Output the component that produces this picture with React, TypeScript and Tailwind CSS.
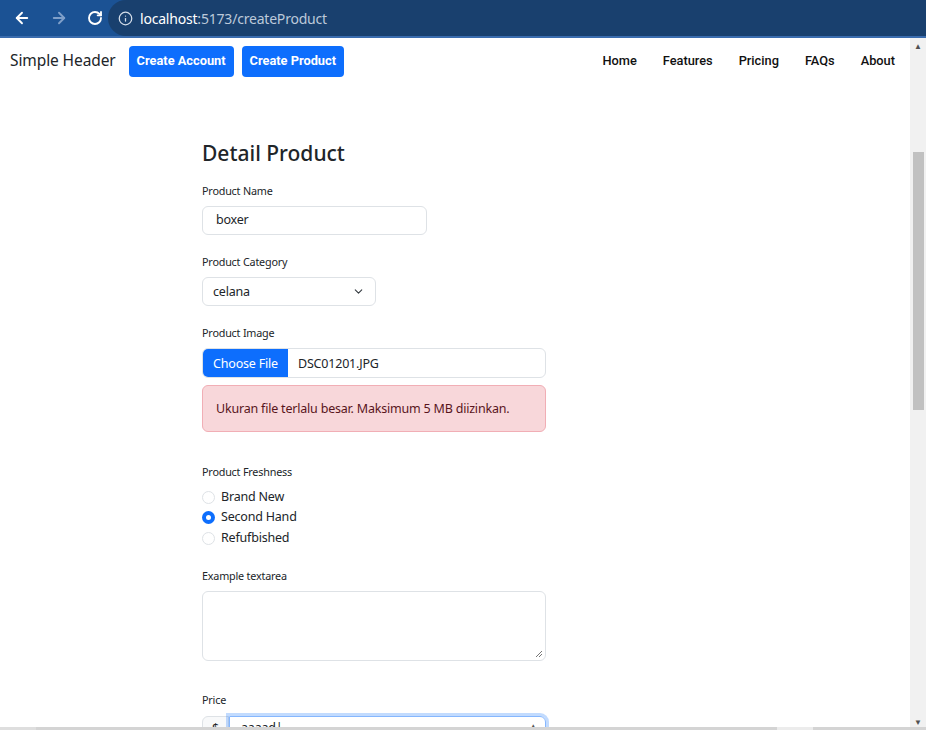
import React from 'react';
import { ArrowLeft, ArrowRight, RotateCw, Info, ChevronDown } from 'lucide-react';

const sans = "font-['Noto_Sans','Open_Sans',sans-serif]";
const navFont = "font-['Roboto','Liberation_Sans',sans-serif]";

const Label: React.FC<{ children: React.ReactNode }> = ({ children }) => (
  <div className="text-[10.8px] leading-[16px] text-[#212529]">{children}</div>
);

const Radio: React.FC<{ label: string; checked?: boolean }> = ({ label, checked }) => (
  <div className="flex items-center h-[20.5px] gap-[6px]">
    {checked ? (
      <span className="w-[13px] h-[13px] rounded-full bg-[#0d6efd] flex items-center justify-center">
        <span className="w-[5px] h-[5px] rounded-full bg-white" />
      </span>
    ) : (
      <span className="w-[13px] h-[13px] rounded-full border border-[#dee2e6] bg-white" />
    )}
    <span className="text-[12.5px] tracking-[-0.2px] text-[#212529]">{label}</span>
  </div>
);

const App: React.FC = () => {
  return (
    <div className={`w-[926px] h-[730px] overflow-hidden flex flex-col bg-white relative ${sans}`}>
      {/* browser bar */}
      <div className="h-[38px] flex-shrink-0 bg-[#1b5294] border-b-2 border-[#3a6cae] flex items-center">
        <div className="flex items-center gap-[19px] pl-[13px] w-[108px] text-white">
          <ArrowLeft className="w-[18px] h-[18px]" strokeWidth={2.5} />
          <ArrowRight className="w-[18px] h-[18px] text-[#7f9fc9]" strokeWidth={2.5} />
          <RotateCw className="w-[16px] h-[16px]" strokeWidth={2.8} />
        </div>
        <div className="flex-1 h-[36px] bg-[#19406e] rounded-l-full flex items-center pl-[10px] gap-[7px]">
          <Info className="w-[15px] h-[15px] text-[#d6dfea]" strokeWidth={2} />
          <span className="text-[14px] tracking-[-0.2px] text-white">
            localhost<span className="text-[#bcc9da]">:5173/createProduct</span>
          </span>
        </div>
      </div>

      <div className="flex flex-1 min-h-0">
        <div className="flex-1 min-w-0 overflow-hidden">
          {/* header */}
          <div className="h-[46px] flex items-center pl-[10px] pr-[15px]">
            <span className="text-[15.5px] tracking-[-0.1px] text-[#212529] mr-[13px]">Simple Header</span>
            <button className={`h-[31px] px-[8px] rounded-[4px] bg-[#0d6efd] text-white text-[12.8px] font-bold mr-[8px] ${navFont}`}>
              Create Account
            </button>
            <button className={`h-[31px] px-[8px] rounded-[4px] bg-[#0d6efd] text-white text-[12.8px] font-bold ${navFont}`}>
              Create Product
            </button>
            <nav className={`ml-auto flex items-center gap-[26px] text-[12.8px] font-medium text-[#111] ${navFont}`}>
              <span>Home</span>
              <span>Features</span>
              <span>Pricing</span>
              <span>FAQs</span>
              <span>About</span>
            </nav>
          </div>

          {/* form */}
          <div className="pl-[202px] pt-[56px] w-[546px] box-content text-[12.5px] tracking-[-0.2px]">
            <h2 className="text-[21px] leading-[26px] font-medium tracking-normal text-[#212529] mb-[17px]">Detail Product</h2>

            <Label>Product Name</Label>
            <div className="mt-[7px] w-[225px] h-[29px] border border-[#dee2e6] rounded-[6px] flex items-center pl-[13px] text-[#212529]">
              boxer
            </div>

            <div className="mt-[19px]"><Label>Product Category</Label></div>
            <div className="mt-[7px] w-[174px] h-[29px] border border-[#dee2e6] rounded-[6px] flex items-center pl-[10px] pr-[10px] text-[#212529]">
              <span className="flex-1 pt-[2px]">celana</span>
              <ChevronDown className="w-[13px] h-[13px] text-[#343a40]" strokeWidth={2} />
            </div>

            <div className="mt-[19px]"><Label>Product Image</Label></div>
            <div className="mt-[7px] w-[344px] h-[30px] border border-[#dee2e6] rounded-[6px] flex overflow-hidden">
              <div className="w-[85px] bg-[#0d6efd] text-white flex items-center justify-center pt-[2px]">Choose File</div>
              <div className="flex items-center pl-[10px] pt-[2px] text-[#212529]">DSC01201.JPG</div>
            </div>
            <div className="mt-[7px] w-[344px] h-[47px] bg-[#f8d7da] border border-[#f1aeb5] rounded-[6px] flex items-center pl-[13px] pt-[2px] text-[#58151c]">
              Ukuran file terlalu besar. Maksimum 5 MB diizinkan.
            </div>

            <div className="mt-[32px]"><Label>Product Freshness</Label></div>
            <div className="mt-[7px] flex flex-col">
              <Radio label="Brand New" />
              <Radio label="Second Hand" checked />
              <Radio label="Refufbished" />
            </div>

            <div className="mt-[19px]"><Label>Example textarea</Label></div>
            <div className="mt-[7px] relative w-[344px] h-[70px] border border-[#dee2e6] rounded-[6px]">
              <svg className="absolute right-[2px] bottom-[2px]" width="8" height="8" viewBox="0 0 8 8">
                <path d="M7 1L1 7M7 4L4 7" stroke="#777" strokeWidth="1" />
              </svg>
            </div>

            <div className="mt-[31px]"><Label>Price</Label></div>
            <div className="mt-[8px] w-[344px] h-[31px] flex">
              <div className="w-[27px] border border-[#dee2e6] rounded-l-[6px] bg-[#f8f9fa] flex justify-center pt-[4px] leading-[16px] text-[#212529]">$</div>
              <div className="flex-1 relative border border-[#86b7fe] rounded-r-[6px] shadow-[0_0_0_3px_rgba(13,110,253,0.25)] pl-[11px] pt-[3px] leading-[16px] text-[#212529]">
                aaaad|
                <span className="absolute right-[8px] top-[4px] text-[8px] leading-[10px] text-[#555]">▲</span>
              </div>
            </div>
          </div>
        </div>

        {/* scrollbar */}
        <div className="w-[16px] flex-shrink-0 bg-[#f1f1f1] flex flex-col items-center">
          <span className="text-[8px] leading-[10px] text-[#505050] mt-[3px]">▲</span>
          <div className="mt-[101px] w-[11px] h-[258px] bg-[#c1c1c1]" />
          <span className="mt-auto mb-[3px] text-[8px] leading-[10px] text-[#505050]">▼</span>
        </div>
      </div>

      {/* bottom strip */}
      <div className="absolute left-0 right-0 bottom-0 h-[3px] bg-[#d4d4d4] flex">
        <div className="w-[36px] bg-[#dedede]" />
        <div className="ml-[741px] w-[36px] bg-[#ececec]" />
      </div>
    </div>
  );
};

export default App;
